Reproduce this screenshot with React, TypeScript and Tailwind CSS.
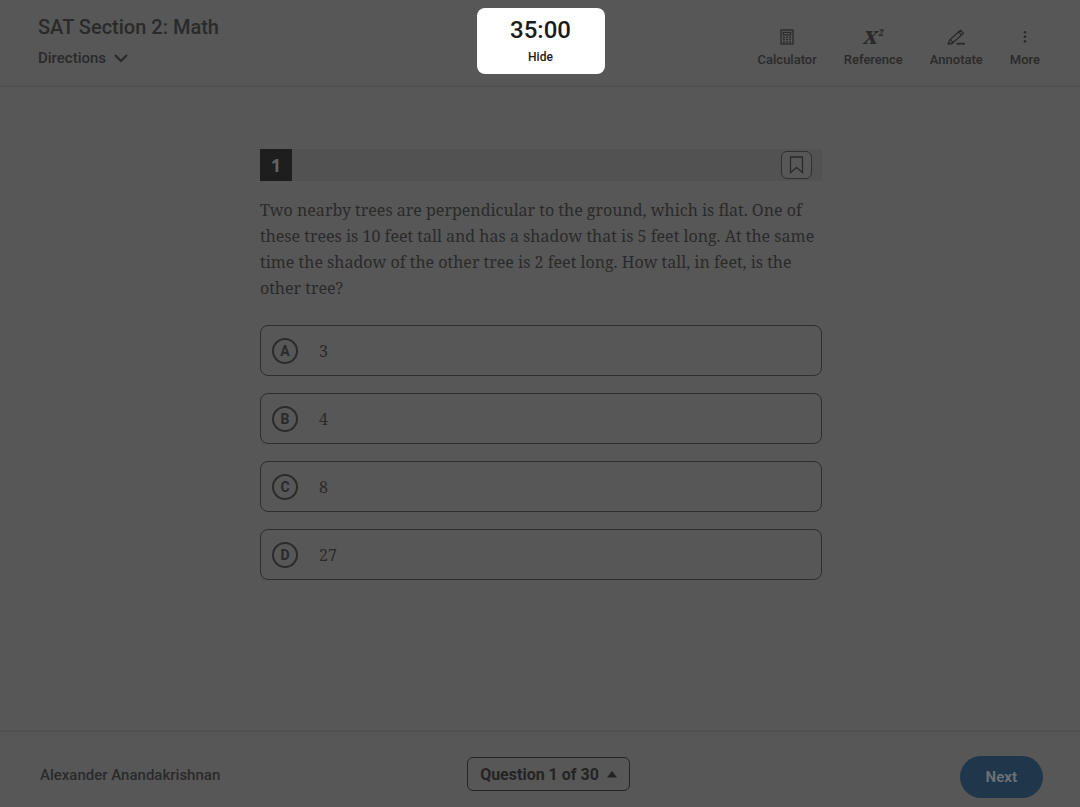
import type { ReactNode } from "react";

interface Tool {
  label: string;
  icon: ReactNode;
}

const TOOLS: Tool[] = [
  { label: "Calculator", icon: <CalculatorIcon /> },
  { label: "Reference",  icon: <ReferenceIcon /> },
  { label: "Annotate",   icon: <AnnotateIcon /> },
  { label: "More",       icon: <MoreIcon /> },
];

const CHOICES = [
  { letter: "A", value: "3" },
  { letter: "B", value: "4" },
  { letter: "C", value: "8" },
  { letter: "D", value: "27" },
];

function CalculatorIcon() {
  return (
    <svg width="14" height="16" viewBox="0 0 14 16" fill="none" stroke="currentColor" aria-hidden="true">
      <rect x="1" y="1" width="12" height="14" strokeWidth="1.3" />
      <rect x="3.3" y="3.4" width="7.4" height="2.4" strokeWidth="1.2" />
      <path d="M3 8.3h8M3 10.6h8M3 12.9h8" strokeWidth="1.5" strokeDasharray="1.9 1.15" />
    </svg>
  );
}

function ReferenceIcon() {
  return (
    <span className="relative block pr-1.5 font-['Noto_Serif',serif] text-lg leading-4 font-black italic" aria-hidden="true">
      X<span className="absolute right-0 -top-1 text-[8px]">2</span>
    </span>
  );
}

function AnnotateIcon() {
  return (
    <svg width="18" height="16" viewBox="0 0 18 16" fill="none" stroke="currentColor" strokeLinejoin="round" aria-hidden="true">
      <path d="M1 15 3.2 10.4 13.4 1.3 16.4 4.3 6.2 13.5z" strokeWidth="1.3" />
      <path d="M3.2 10.4 6.2 13.5M11.6 3l3 3M1 15h3.6l1.6-1.5" strokeWidth="1.1" />
      <path d="M9.5 14.7H18" strokeWidth="1.8" />
    </svg>
  );
}

function MoreIcon() {
  return (
    <svg width="4" height="16" viewBox="0 0 4 16" fill="currentColor" aria-hidden="true">
      <circle cx="2" cy="3.2" r="1.3" />
      <circle cx="2" cy="7.8" r="1.3" />
      <circle cx="2" cy="12.4" r="1.3" />
    </svg>
  );
}

function Header() {
  return (
    <header className="grid grid-cols-[1fr_auto_1fr] items-start border-b-2 border-[#515151] pr-[37px] pb-[11px] pl-[38px]">
      <div className="pt-[15px]">
        <h1 className="text-xl leading-6 font-medium">SAT Section 2: Math</h1>
        <button className="mt-[7px] flex items-center gap-2 text-[15px] leading-6 font-medium">
          Directions
          <svg width="14" height="10" viewBox="0 0 14 10" fill="none" stroke="currentColor" strokeWidth="2.2" aria-hidden="true">
            <path d="M1 2l6 6 6-6" />
          </svg>
        </button>
      </div>

      <div className="mt-2 flex h-[66px] w-32 flex-col items-center rounded-lg bg-white pt-2.5 text-[#1b1b1b]">
        <time className="text-2xl leading-6 font-medium">35:00</time>
        <button className="mt-[7px] text-xs leading-4 font-medium">Hide</button>
      </div>

      <nav className="flex justify-end gap-[27px] pt-[29px] pr-[3px]">
        {TOOLS.map(tool => (
          <button key={tool.label} className="flex flex-col items-center gap-[7px] text-[13px] leading-4 font-medium">
            {tool.icon}
            {tool.label}
          </button>
        ))}
      </nav>
    </header>
  );
}

function Question() {
  return (
    <section className="mx-auto w-full max-w-[562px]">
      <div className="flex h-8 items-center justify-between bg-[#525252] pr-2.5">
        <span className="flex size-8 items-center justify-center bg-[#1e1e1e] font-['Noto_Sans',sans-serif] text-lg font-bold text-[#626262]">1</span>
        <button aria-label="Bookmark" className="flex h-7 w-[31px] items-center justify-center rounded-md border border-[#303030] bg-[#575757]">
          <svg width="15" height="18" viewBox="0 0 15 18" fill="none" stroke="currentColor" strokeWidth="1.3" aria-hidden="true">
            <path d="M1.5 1h12v15.5l-6-5-6 5z" />
          </svg>
        </button>
      </div>

      <fieldset>
        <legend className="pt-4 font-['Noto_Serif','Liberation_Serif',serif] text-base leading-[26px]">
          Two nearby trees are perpendicular to the ground, which is flat. One of these trees is 10 feet tall and has a shadow that is 5 feet long. At the same time the shadow of the other tree is 2 feet long. How tall, in feet, is the other tree?
        </legend>
        <div className="mt-6 flex flex-col gap-[17px]">
          {CHOICES.map(choice => (
            <label
              key={choice.letter}
              className="relative flex min-h-[51px] items-center gap-[21px] rounded-lg border border-[#2e2e2e] px-[11px] has-focus-visible:border-black"
            >
              <input type="radio" name="answer" value={choice.letter} className="sr-only" />
              <span className="flex size-[26px] items-center justify-center rounded-full border-2 border-[#2b2b2b] text-sm leading-none font-bold">
                {choice.letter}
              </span>
              <span className="font-['Noto_Serif','Liberation_Serif',serif] text-base leading-[26px]">{choice.value}</span>
            </label>
          ))}
        </div>
      </fieldset>
    </section>
  );
}

function Footer() {
  return (
    <footer className="grid grid-cols-[1fr_auto_1fr] items-center border-t-2 border-[#515151] pt-6 pr-[37px] pb-[9px] pl-10">
      <span className="pb-1 text-[15px] leading-5 font-medium">Alexander Anandakrishnan</span>
      <div className="pb-1.5 pl-3.5">
        <button className="flex h-[34px] items-center gap-2 rounded-md border border-[#252525] px-3 pt-0.5 text-base font-bold text-[#242424]">
          Question 1 of 30
          <svg width="10" height="8" viewBox="0 0 10 8" fill="currentColor" aria-hidden="true">
            <path d="M5 0l5 6.5H0z" />
          </svg>
        </button>
      </div>
      <button className="h-[42px] justify-self-end rounded-full bg-[#1f364b] px-[26px] text-[15px] font-bold text-[#6b7074]">Next</button>
    </footer>
  );
}

export default function App() {
  return (
    <div className="flex min-h-screen flex-col bg-[#575757] font-[Roboto,sans-serif] text-[#2a2a2a]">
      <Header />
      <main className="flex-1 pt-[62px] pr-4 pb-8 pl-[18px]">
        <Question />
      </main>
      <Footer />
    </div>
  );
}
